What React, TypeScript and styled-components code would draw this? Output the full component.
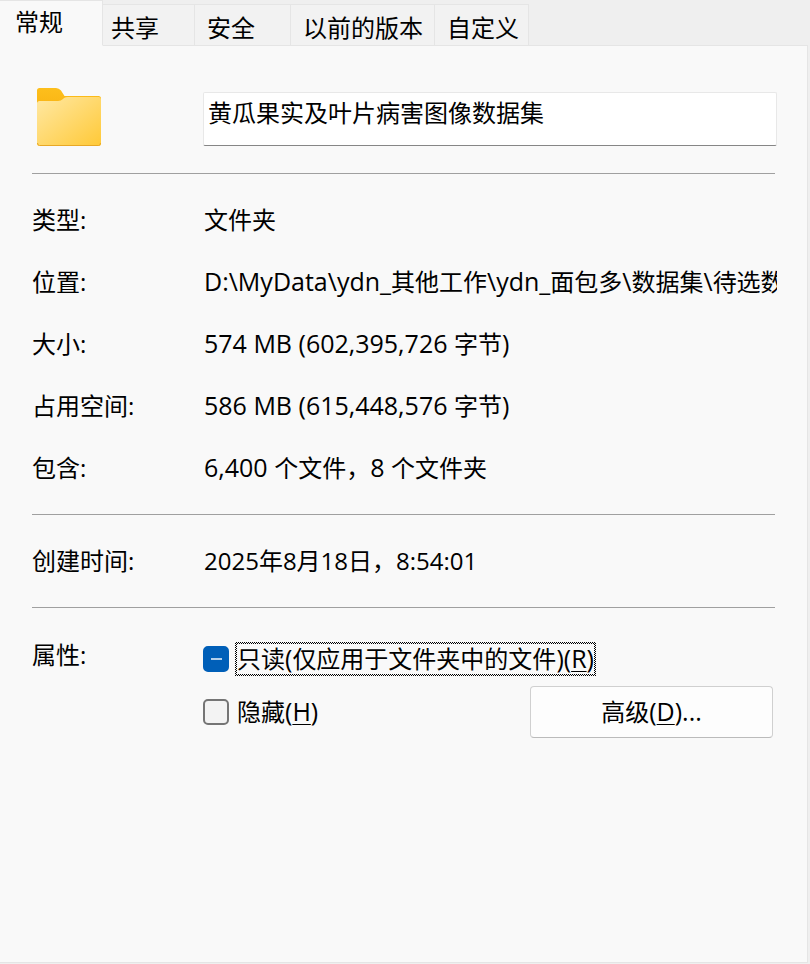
import React, { useEffect, useRef, useState } from "react";
import styled, { createGlobalStyle, css } from "styled-components";

const GlobalStyle = createGlobalStyle`
  * { box-sizing: border-box; }
  body {
    margin: 0;
    background: #efefef;
    color: #000;
    font-family: "Open Sans", "Noto Sans CJK SC", sans-serif;
    font-size: 24px;
    line-height: 32px;
  }
  button, input { font: inherit; color: inherit; }
`;

const Page = styled.div`
  display: flex;
  flex-direction: column;
  min-height: 100vh;
  padding: 0 2px 1px 0;
`;

const TabStrip = styled.div`
  display: flex;
  align-items: stretch;
  height: 46px;
`;

const Tab = styled.button<{ $width: number; $start: number; $active: boolean }>`
  flex: none;
  min-width: ${(p) => p.$width}px;
  margin: 4px 0 0;
  padding: 3px 0 0 ${(p) => p.$start}px;
  border: 1px solid #e5e5e5;
  border-left: 0;
  background: #f2f2f2;
  text-align: left;
  line-height: 40px;
  white-space: nowrap;

  ${(p) =>
    p.$active &&
    css`
      margin: 0;
      padding-top: 0;
      padding-bottom: 2px;
      border-bottom-color: #f9f9f9;
      background: #f9f9f9;
    `}
`;

const StripRest = styled.div`
  flex: 1;
  border-bottom: 1px solid #e5e5e5;
`;

const Panel = styled.main`
  flex: 1;
  padding: 46px 30px 46px 32px;
  border: solid #e5e5e5;
  border-width: 0 1px 1px 0;
  background: #f9f9f9;
`;

const Header = styled.div`
  display: grid;
  grid-template-columns: 171px minmax(0, 1fr);
  align-items: start;
`;

const FolderIcon = styled.svg`
  display: block;
  width: 64px;
  height: 58px;
  margin: -4px 0 0 5px;
`;

const NameInput = styled.input`
  width: 100%;
  height: 54px;
  padding: 0 4px 15px;
  border: 1px solid #e8e8e8;
  border-bottom-color: #868686;
  border-radius: 2px;
  background: #fff;
  outline: none;
`;

const Divider = styled.hr`
  height: 1px;
  margin: 0 2px 0 0;
  border: 0;
  background: #a0a0a0;

  ${Header} + & {
    margin-top: 27px;
  }
`;

const Details = styled.dl`
  display: grid;
  grid-template-columns: 171px minmax(0, 1fr);
  grid-auto-rows: 32px;
  row-gap: 30px;
  margin: 30px 0;
`;

const Term = styled.dt`
  white-space: nowrap;
`;

const Value = styled.dd`
  margin: 0;
  padding-left: 1px;
  overflow: hidden;
  white-space: nowrap;
`;

const Latin = styled.span`
  font-size: 25px;
  line-height: 24px;
`;

const Attributes = styled.section`
  display: grid;
  grid-template-columns: 171px minmax(0, 1fr);
  align-items: start;
  margin-top: 31px;
`;

const Options = styled.div`
  display: flex;
  flex-direction: column;
  padding: 3px 4px 0 0;
`;

const OptionRow = styled.div`
  display: flex;
  align-items: center;
  justify-content: space-between;
  min-height: 34px;

  & + & {
    margin-top: 10px;
  }
`;

const CheckLabel = styled.label`
  display: flex;
  align-items: center;
  gap: 6px;
`;

const CheckBox = styled.input`
  appearance: none;
  flex: none;
  width: 26px;
  height: 26px;
  margin: 0;
  border: 2px solid #757575;
  border-radius: 5px;
  background: #f3f3f3;
  outline: none;

  &:indeterminate,
  &:checked {
    border-color: #005fb8;
    background: linear-gradient(#b3d0eb, #b3d0eb) center / 11px 2px no-repeat #005fb8;
  }
`;

const CheckText = styled.span<{ $focused?: boolean }>`
  border: 2px solid transparent;
  line-height: 30px;
  white-space: nowrap;

  ${(p) =>
    p.$focused &&
    css`
      background:
        linear-gradient(#f9f9f9, #f9f9f9) padding-box,
        repeating-conic-gradient(#000 0 25%, #f9f9f9 0 50%) 0 0 / 2px 2px border-box;
    `}
`;

const AccessKey = styled.span`
  text-decoration: underline;
  text-decoration-thickness: 1px;
  text-underline-offset: 3px;
`;

const PushButton = styled.button`
  width: 243px;
  height: 52px;
  padding: 0;
  border: 1px solid #d0d0d0;
  border-bottom-color: #bbb;
  border-radius: 4px;
  background: #fdfdfd;
`;

const tabs = [
  { title: "常规", width: 103, start: 15 },
  { title: "共享", width: 92, start: 8 },
  { title: "安全", width: 96, start: 12 },
  { title: "以前的版本", width: 144, start: 12 },
  { title: "自定义", width: 94, start: 12 },
];

const details = [
  ["类型:", "文件夹"],
  ["位置:", "D:\\MyData\\ydn_其他工作\\ydn_面包多\\数据集\\待选数据集"],
  ["大小:", "574 MB (602,395,726 字节)"],
  ["占用空间:", "586 MB (615,448,576 字节)"],
  ["包含:", "6,400 个文件，8 个文件夹"],
];

/* Latin runs are set one size up so they balance the Chinese characters. */
function MixedText({ text }: { text: string }) {
  return (
    <>
      {text.split(/([\x20-\x7e]+)/).map((run, i) => (i % 2 ? <Latin key={i}>{run}</Latin> : run))}
    </>
  );
}

function Folder() {
  return (
    <FolderIcon viewBox="0 0 64 58" aria-hidden="true">
      <defs>
        <linearGradient id="front" x1="0" y1="0" x2="1" y2="1">
          <stop offset="0" stopColor="#ffe8a3" />
          <stop offset="1" stopColor="#ffc937" />
        </linearGradient>
        <linearGradient id="back" x1="0" y1="0" x2="0" y2="1">
          <stop offset="0" stopColor="#fdbf1c" />
          <stop offset="0.6" stopColor="#fbb917" />
          <stop offset="1" stopColor="#e8a41a" />
        </linearGradient>
      </defs>
      <path d="M0 2.5Q0 0 2.5 0H19Q22 0 24 2.500L27.500 8H61.500Q64 8 64 10.500V20H0Z" fill="url(#back)" />
      <path d="M0 15.500Q0 13 2.500 13H21Q24 13 26 11L27 10Q28.500 9 31 9H61.500Q64 9 64 11.500V55.500Q64 58 61.500 58H2.500Q0 58 0 55.500Z" fill="url(#front)" />
      <path d="M0.500 55Q0.500 57.500 2.500 57.500H61.500Q63.500 57.500 63.500 55" fill="none" stroke="#e8a826" />
    </FolderIcon>
  );
}

export default function App() {
  const [active, setActive] = useState(0);
  const [name, setName] = useState("黄瓜果实及叶片病害图像数据集");
  const readOnlyBox = useRef<HTMLInputElement>(null);

  useEffect(() => {
    if (readOnlyBox.current) readOnlyBox.current.indeterminate = true;
  }, []);

  return (
    <Page lang="zh-CN">
      <GlobalStyle />
      <TabStrip role="tablist">
        {tabs.map((tab, i) => (
          <Tab
            key={tab.title}
            type="button"
            role="tab"
            aria-selected={i === active}
            $active={i === active}
            $width={tab.width}
            $start={tab.start}
            onClick={() => setActive(i)}
          >
            {tab.title}
          </Tab>
        ))}
        <StripRest />
      </TabStrip>
      <Panel role="tabpanel">
        <Header>
          <Folder />
          <NameInput aria-label="名称" value={name} onChange={(e) => setName(e.target.value)} />
        </Header>
        <Divider />
        <Details>
          {details.map(([term, value]) => (
            <React.Fragment key={term}>
              <Term>{term}</Term>
              <Value>
                <MixedText text={value} />
              </Value>
            </React.Fragment>
          ))}
        </Details>
        <Divider />
        <Details>
          <Term>创建时间:</Term>
          <Value>2025年8月18日，8:54:01</Value>
        </Details>
        <Divider />
        <Attributes>
          <span>属性:</span>
          <Options>
            <OptionRow>
              <CheckLabel>
                <CheckBox type="checkbox" ref={readOnlyBox} />
                <CheckText $focused>
                  <MixedText text="只读(仅应用于文件夹中的文件)(" />
                  <Latin>
                    <AccessKey>R</AccessKey>)
                  </Latin>
                </CheckText>
              </CheckLabel>
            </OptionRow>
            <OptionRow>
              <CheckLabel>
                <CheckBox type="checkbox" />
                <CheckText>
                  隐藏
                  <Latin>
                    (<AccessKey>H</AccessKey>)
                  </Latin>
                </CheckText>
              </CheckLabel>
              <PushButton type="button">
                高级
                <Latin>
                  (<AccessKey>D</AccessKey>)...
                </Latin>
              </PushButton>
            </OptionRow>
          </Options>
        </Attributes>
      </Panel>
    </Page>
  );
}
